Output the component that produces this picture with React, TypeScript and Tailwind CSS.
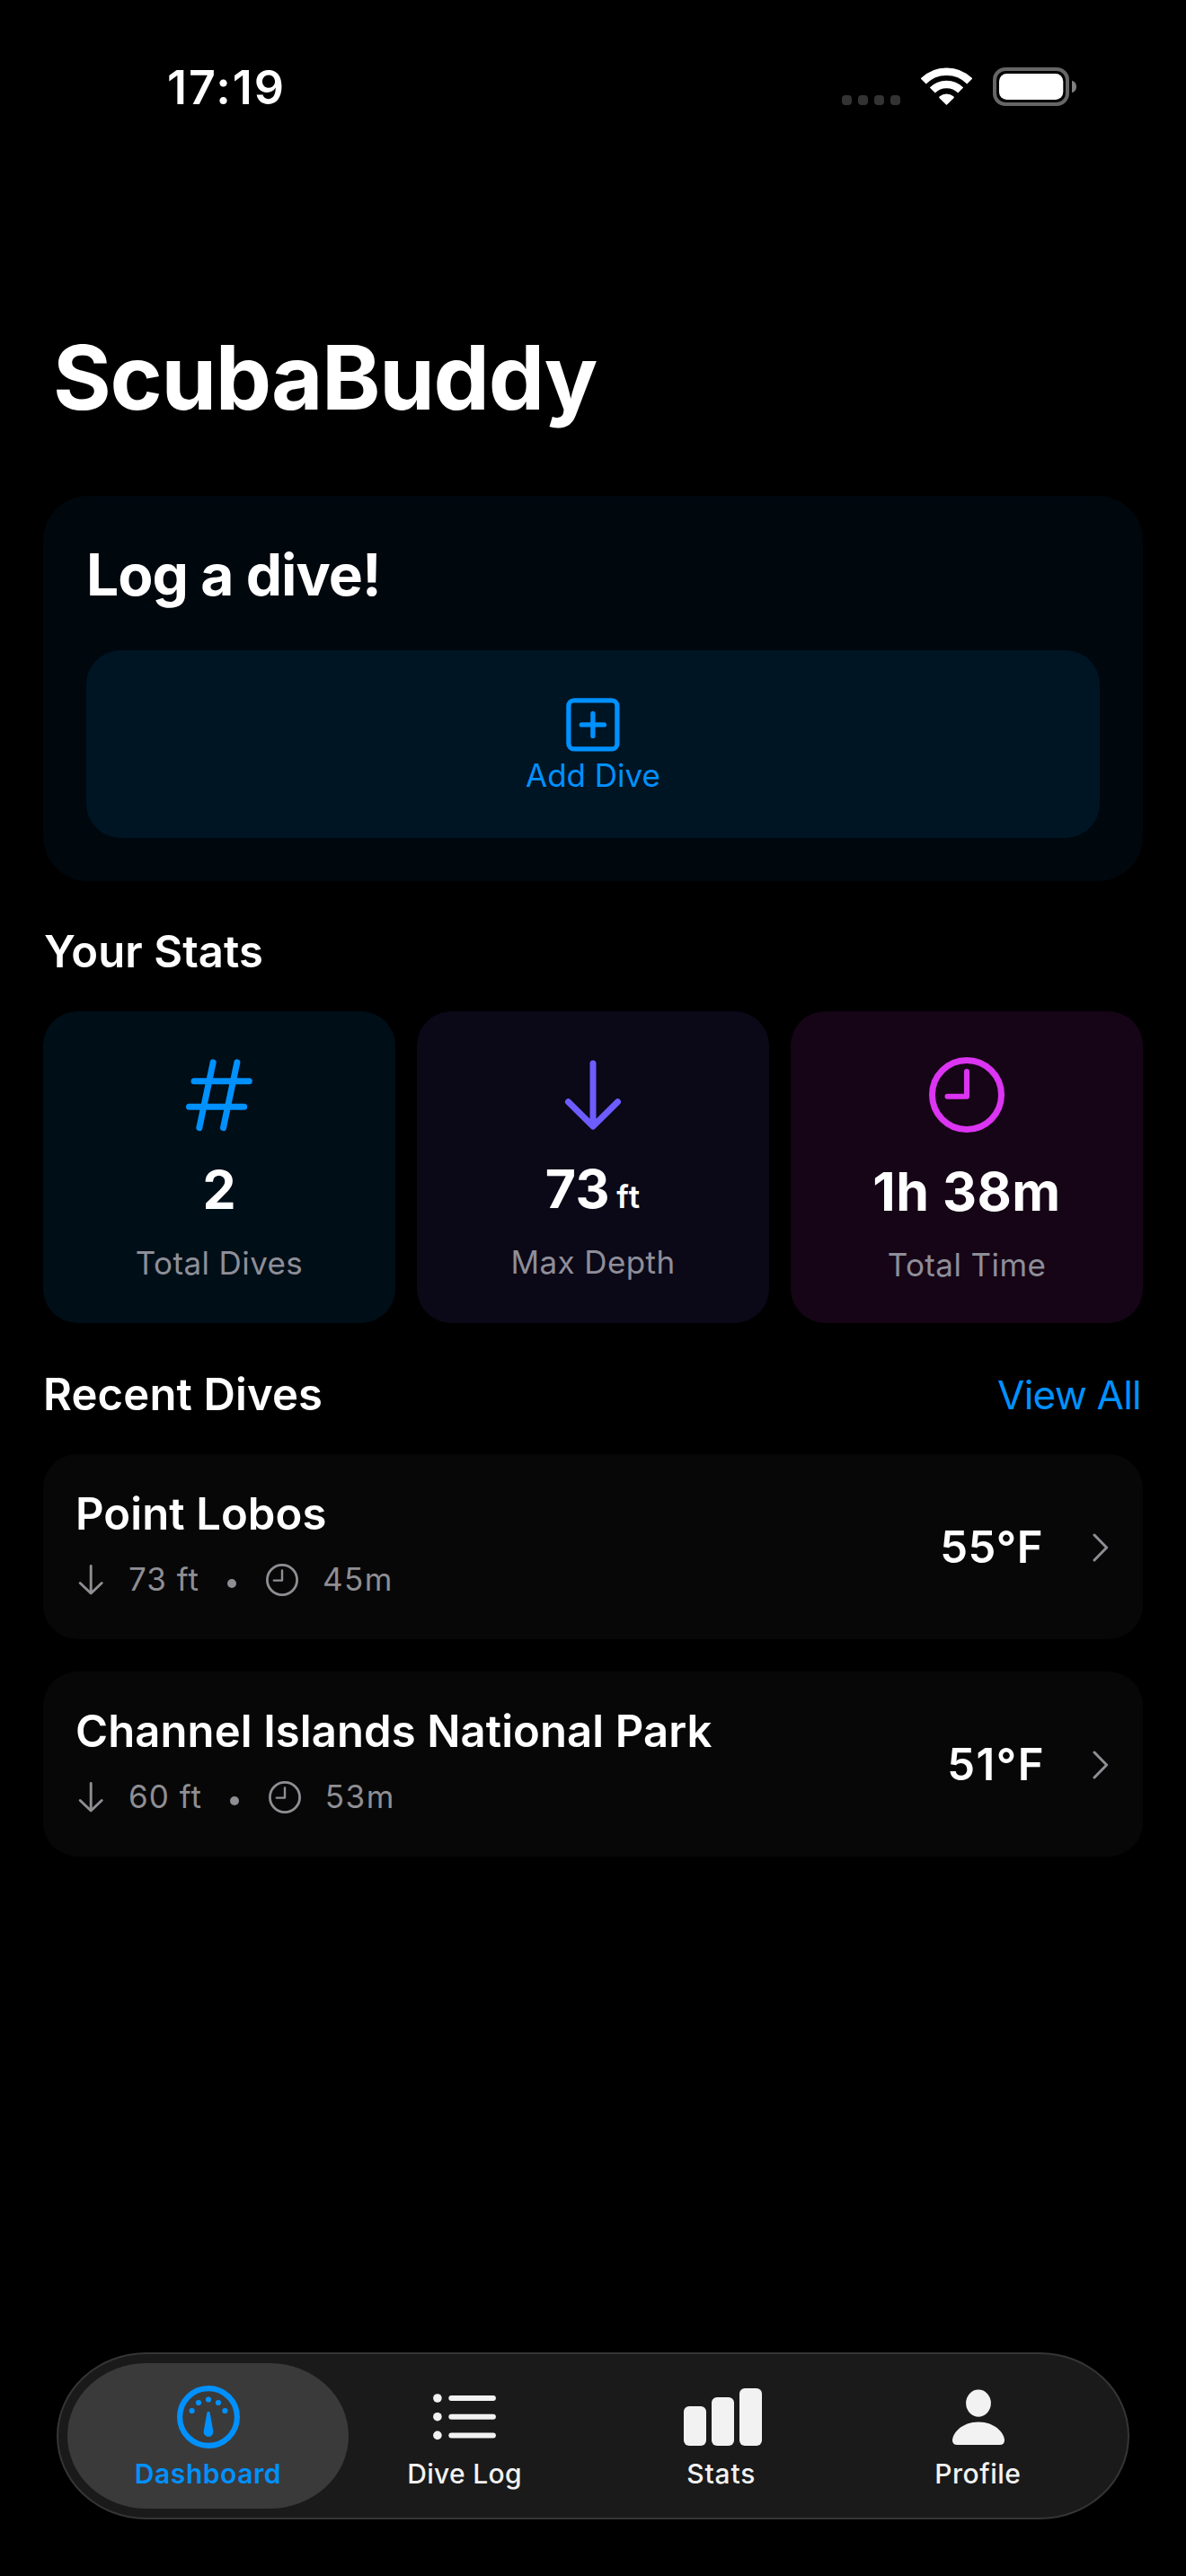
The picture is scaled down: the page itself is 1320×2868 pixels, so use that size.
import React from 'react';

interface StatCardProps {
    icon: React.ReactNode;
    label: string;
    className: string;
    bodyClassName: string;
    children: React.ReactNode;
}

interface Dive {
    id: string;
    site: string;
    depth: string;
    duration: string;
    temperature: string;
    temperatureClassName: string;
}

interface TabProps {
    label: string;
    icon: React.ReactNode;
    labelClassName: string;
    active?: boolean;
}

const dives: Dive[] = [
    { id: 'dive_1', site: 'Point Lobos', depth: '73 ft', duration: '45m', temperature: '55°F', temperatureClassName: 'tracking-[0.5px]' },
    { id: 'dive_2', site: 'Channel Islands National Park', depth: '60 ft', duration: '53m', temperature: '51°F', temperatureClassName: 'tracking-[1.5px] -mr-[2px]' },
];

const SignalDots = () => (
    <svg width="65" height="11" viewBox="0 0 65 11" fill="#333333">
        {[0, 18, 36, 54].map(x => <rect key={x} x={x} y="0" width="11" height="11" rx="4" />)}
    </svg>
);

const WifiIcon = () => (
    <svg width="57" height="43" viewBox="0 0 57 43" fill="none" stroke="white" strokeWidth="8.5">
        <path d="M2.7 15.4A36.5 36.5 0 0 1 54.3 15.4" />
        <path d="M12.8 25.5A22.2 22.2 0 0 1 44.2 25.5" />
        <path d="M28.5 42L20.3 33.9Q19.8 33 20.8 32.2A12.5 12.5 0 0 1 36.2 32.2Q37.2 33 36.7 33.9Z" fill="white" stroke="none" />
    </svg>
);

const BatteryIcon = () => (
    <svg width="93" height="43" viewBox="0 0 93 43" fill="none">
        <rect x="2" y="2" width="81" height="39" rx="12" stroke="#666666" strokeWidth="4" />
        <rect x="7" y="7" width="71.3" height="29" rx="8.5" fill="white" />
        <path d="M88 14.8Q93 16.5 93 21.5T88 28.2Z" fill="#808080" />
    </svg>
);

const PlusSquareIcon = () => (
    <svg width="60" height="60" viewBox="0 0 60 60" fill="none" stroke="#0091ff" strokeWidth="5.3" strokeLinecap="round">
        <rect x="2.9" y="2.9" width="54" height="54" rx="6" />
        <path d="M29.9 17.3V42.4M17.3 29.9H42.4" />
    </svg>
);

const HashIcon = () => (
    <svg width="74" height="84" viewBox="0 0 74 84" fill="none" stroke="#0091ff" strokeWidth="7" strokeLinecap="round">
        <path d="M9 26.7H70.3M3.5 55.3H64.7M30.2 5.8L14.8 78.7M56.9 5.8L41.5 78.7" />
    </svg>
);

const DepthIcon = () => (
    <svg width="84" height="84" viewBox="0 0 84 84" fill="none" stroke="#6d5dff" strokeWidth="7" strokeLinecap="round" strokeLinejoin="round">
        <path d="M42 7V76M14.5 49.8L42 77L69.5 49.8" />
    </svg>
);

const ClockIcon = () => (
    <svg width="84" height="84" viewBox="0 0 84 84" fill="none" stroke="#db34f2" strokeWidth="7">
        <circle cx="42" cy="42" r="38.5" />
        <path d="M42 16V43.7H20.5" strokeWidth="6" strokeLinecap="round" strokeLinejoin="round" />
    </svg>
);

const SmallDepthIcon = () => (
    <svg width="34" height="34" viewBox="0 0 34 34" fill="none" stroke="#8e8e93" strokeWidth="2.9" strokeLinecap="round" strokeLinejoin="round">
        <path d="M17.2 1.5V31M5.2 20.5L17.2 32L29.2 20.5" />
    </svg>
);

const SmallClockIcon = () => (
    <svg width="36" height="36" viewBox="0 0 36 36" fill="none" stroke="#8e8e93" strokeWidth="2.8">
        <circle cx="18" cy="18" r="16.6" />
        <path d="M18 7.5V18.6H8.8" strokeWidth="2.4" strokeLinecap="round" strokeLinejoin="round" />
    </svg>
);

const ChevronIcon = () => (
    <svg width="20" height="34" viewBox="0 0 20 34" fill="none" stroke="#8e8e93" strokeWidth="3" strokeLinecap="round" strokeLinejoin="round">
        <path d="M2 3L15.7 17L2 31" />
    </svg>
);

const GaugeIcon = () => (
    <svg width="70" height="80" viewBox="0 -5 70 80" fill="#0091ff">
        <circle cx="35" cy="35" r="31.9" fill="none" stroke="#0091ff" strokeWidth="6.2" />
        <circle cx="16.6" cy="28" r="3.1" />
        <circle cx="24" cy="19" r="3.1" />
        <circle cx="35" cy="15.5" r="3.1" />
        <circle cx="46" cy="19" r="3.1" />
        <circle cx="53.4" cy="28" r="3.1" />
        <path d="M33.4 30Q35 27.4 36.6 30L40.3 50.5A5.4 5.4 0 1 1 29.7 50.5Z" />
    </svg>
);

const ListIcon = () => (
    <svg width="70" height="80" viewBox="0 0 70 80" fill="#f2f2f2">
        {[19, 39.7, 60.4].map(y => (
            <g key={y}>
                <circle cx="4.9" cy={y} r="4.8" />
                <rect x="17.3" y={y - 3} width="52.6" height="6" rx="3" />
            </g>
        ))}
    </svg>
);

const BarsIcon = () => (
    <svg width="92" height="80" viewBox="-4 0 92 80" fill="#f2f2f2">
        <rect x="0" y="28" width="25" height="44" rx="6" />
        <rect x="31" y="18" width="25" height="54" rx="6" />
        <rect x="62" y="8" width="25" height="64" rx="6" />
    </svg>
);

const PersonIcon = () => (
    <svg width="60" height="80" viewBox="0 0 60 80" fill="#f2f2f2">
        <ellipse cx="31" cy="24.6" rx="13.9" ry="15.1" />
        <path d="M7.5 71Q2 71 2 66C2 58 12.5 45.4 31 45.4S60 58 60 66Q60 71 54.5 71Z" />
    </svg>
);

const StatusBar = () => (
    <div className="flex h-[196px] items-center justify-between pl-[186px] pr-[122px]">
        <span className="text-[52px] font-semibold leading-none tracking-[2px]">17:19</span>
        <div className="mb-[3px] flex h-[43px] items-end">
            <div className="mb-[1px]"><SignalDots /></div>
            <div className="ml-[23px]"><WifiIcon /></div>
            <div className="ml-[23px]"><BatteryIcon /></div>
        </div>
    </div>
);

const LogDiveCard = () => (
    <section className="mt-[72px] rounded-[50px] bg-[#00070d] p-12">
        <h2 className="text-[64px] font-bold leading-[79px] tracking-[-0.94px]">Log a dive!</h2>
        <button type="button" className="mt-[45px] flex h-[209px] w-full flex-col items-center rounded-[38px] bg-[#001524] pt-[53px] text-[#0091ff]">
            <PlusSquareIcon />
            <span className="mt-1.5 text-[35px] leading-[41px]">Add Dive</span>
        </button>
    </section>
);

const StatCard: React.FC<StatCardProps> = ({ icon, label, className, bodyClassName, children }) => (
    <div className={`flex h-[347px] flex-1 flex-col items-center rounded-[38px] pt-[51px] ${className}`}>
        {icon}
        <div className={`flex flex-col items-center ${bodyClassName}`}>
            <div className="flex h-[72px] items-baseline text-[59px] font-bold leading-[72px]">{children}</div>
            <div className="mt-[23px] text-[35px] leading-[44px] tracking-[0.4px] text-[#8e8e99]">{label}</div>
        </div>
    </div>
);

const DiveRow: React.FC<{ dive: Dive }> = ({ dive }) => (
    <div className="flex h-[206px] items-center justify-between rounded-[38px] bg-[#070707] px-9">
        <div>
            <h3 className="text-[49px] font-semibold leading-[60px] tracking-[0.1px]">{dive.site}</h3>
            <div className="mt-[21px] mb-2 flex items-center text-[35px] leading-[43px] text-[#8e8e93]">
                <SmallDepthIcon />
                <span className="ml-[25px] tracking-[1px]">{dive.depth}</span>
                <span className="ml-[31px] mt-2 size-[10px] rounded-full bg-[#8e8e93]" />
                <div className="ml-[33px]"><SmallClockIcon /></div>
                <span className="ml-[27px] tracking-[1.5px]">{dive.duration}</span>
            </div>
        </div>
        <div className="mt-[2px] flex items-center gap-[55px]">
            <span className={`text-[49px] font-semibold leading-[60px] ${dive.temperatureClassName}`}>{dive.temperature}</span>
            <ChevronIcon />
        </div>
    </div>
);

const Tab: React.FC<TabProps> = ({ label, icon, labelClassName, active }) => (
    <button type="button" className={`-ml-[27.4px] flex h-[162px] w-[313px] shrink-0 flex-col items-center rounded-[88px/81px] pt-5 first:ml-0 ${active ? 'bg-[#3a3a3a] text-[#0091ff]' : 'text-[#f2f2f2]'}`}>
        {icon}
        <span className={`mt-[5px] text-[30px] leading-[37px] ${labelClassName}`}>{label}</span>
    </button>
);

const App: React.FC = () => {
    return (
        <div className="flex h-[2868px] w-[1320px] flex-col bg-black font-['Inter',sans-serif] text-white">
            <StatusBar />

            <main className="px-12">
                <h1 className="ml-[11px] mt-[164px] text-[99px] font-bold leading-[120px] tracking-[-1.3px]">ScubaBuddy</h1>

                <LogDiveCard />

                <h2 className="mt-[49px] ml-[1px] text-[49px] font-semibold leading-[60px] tracking-[0.1px]">Your Stats</h2>
                <div className="mt-[36px] flex gap-6">
                    <StatCard icon={<HashIcon />} label="Total Dives" className="bg-[#000e17]" bodyClassName="mt-[28px]">
                        2
                    </StatCard>
                    <StatCard icon={<DepthIcon />} label="Max Depth" className="bg-[#0b0817]" bodyClassName="mt-[27px]">
                        <span className="tracking-[0.6px]">73</span>
                        <span className="ml-[7px] text-[35px] font-semibold leading-none tracking-[1.2px]">ft</span>
                    </StatCard>
                    <StatCard icon={<ClockIcon />} label="Total Time" className="bg-[#160516]" bodyClassName="mt-[30px]">
                        <span className="tracking-[0.47px]">1h 38m</span>
                    </StatCard>
                </div>

                <div className="mt-[50px] flex items-center justify-between">
                    <h2 className="text-[49px] font-semibold leading-[60px] tracking-[0.14px]">Recent Dives</h2>
                    <a href="#" className="mr-[2px] text-[44px] leading-[60px] tracking-[-0.75px] text-[#0091ff]">View All</a>
                </div>
                <div className="mt-[36px] flex flex-col gap-9">
                    {dives.map(dive => <DiveRow key={dive.id} dive={dive} />)}
                </div>
            </main>

            <nav className="mx-[63px] mt-auto mb-[63px] flex h-[186px] rounded-[100px/93px] border-2 border-[#353535] bg-[#1a1a1a] p-[10px]">
                <Tab label="Dashboard" icon={<GaugeIcon />} labelClassName="font-semibold tracking-[0.56px]" active />
                <Tab label="Dive Log" icon={<ListIcon />} labelClassName="font-medium tracking-[0.3px]" />
                <Tab label="Stats" icon={<BarsIcon />} labelClassName="font-medium tracking-[0.8px]" />
                <Tab label="Profile" icon={<PersonIcon />} labelClassName="font-medium tracking-[0.5px]" />
            </nav>
        </div>
    );
};

export default App;
